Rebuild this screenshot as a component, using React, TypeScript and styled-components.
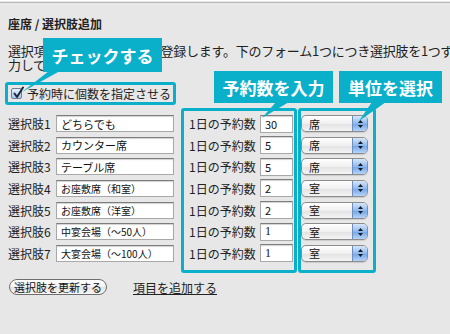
import React from "react";
import styled, { createGlobalStyle } from "styled-components";

const TEAL = "#0aafca";
const JP = `"Noto Sans CJK JP", "Noto Sans", sans-serif`;

const Global = createGlobalStyle`
  html, body { margin: 0; padding: 0; background: #e7e7e7; overflow: hidden; }
  body { font-family: ${JP}; color: #222; }
`;

const Page = styled.div`
  position: relative;
  width: 450px;
  height: 334px;
  overflow: hidden;
  padding: 0 8px;
  box-sizing: border-box;
  background: #e7e7e7;
`;

const TopRule = styled.div`
  margin: 0 -8px;
  height: 1px;
  border-top: 1px solid #ffffff;
  border-bottom: 1px solid #b8b8b8;
`;

const Title = styled.h1`
  margin: 14px 0 0;
  font-size: 12px;
  line-height: 14px;
  font-weight: 700;
  color: #222;
`;

const Desc = styled.p`
  margin: 13px 0 0;
  font-size: 13px;
  line-height: 14px;
  letter-spacing: -0.25px;
  white-space: nowrap;
  color: #222;
`;

const CheckFrame = styled.div`
  margin: 10px 0 0 -3px;
  width: 171px;
  height: 23px;
  box-sizing: border-box;
  border: 3px solid ${TEAL};
  border-radius: 3px;
  display: flex;
  align-items: center;
  gap: 5px;
  padding-left: 3px;
  font-size: 12px;
  color: #222;
  white-space: nowrap;
`;

const CheckBox = styled.span`
  width: 11px;
  height: 11px;
  box-sizing: border-box;
  border: 1px solid #6f7f93;
  border-radius: 2px;
  background: linear-gradient(#e6f0fb, #a9c7ec);
  position: relative;
  flex: none;
  svg { position: absolute; left: 0; top: -3px; }
`;

const Table = styled.div`
  margin-top: 3px;
  display: flex;
  align-items: flex-start;
`;

const LeftCol = styled.div`
  padding-top: 4.7px;
  width: 166px;
`;

const Frame = styled.div<{ $w: number; $ml: number; $pl: number }>`
  margin-left: ${(p) => p.$ml}px;
  width: ${(p) => p.$w}px;
  box-sizing: border-box;
  border: 3px solid ${TEAL};
  border-radius: 3px;
  padding: 1.7px 0 6px ${(p) => p.$pl}px;
`;

const Row = styled.div`
  height: 21.67px;
  display: flex;
  align-items: center;
`;

const Label = styled.span`
  width: 48px;
  font-size: 12px;
  color: #222;
  white-space: nowrap;
`;

const CountLabel = styled.span`
  width: 67px;
  font-size: 12px;
  color: #222;
  white-space: nowrap;
`;

const Field = styled.input<{ $w: number; $h: number; $serif?: boolean; $ml?: number; $small?: boolean }>`
  width: ${(p) => p.$w}px;
  height: ${(p) => p.$h}px;
  margin: 0 0 0 ${(p) => p.$ml ?? 0}px;
  box-sizing: border-box;
  border: 1px solid #a9a9a9;
  border-top-color: #7d7d7d;
  box-shadow: inset 0 1px 1px rgba(0, 0, 0, 0.18);
  background: #fff;
  padding: 0 0 0 4px;
  font-family: ${(p) => (p.$serif ? `"Liberation Serif", serif` : JP)};
  font-size: ${(p) => (p.$serif ? 12 : p.$small ? 10 : 11)}px;
  color: #111;
  outline: none;
`;

const PopUp = styled.div`
  width: 67px;
  height: 17px;
  box-sizing: border-box;
  border: 1px solid #8c8c8c;
  border-radius: 5px;
  background: linear-gradient(#ffffff, #f0f0f0 50%, #e2e2e2 51%, #f4f4f4);
  display: flex;
  align-items: center;
  overflow: hidden;
  box-shadow: 0 1px 1px rgba(0, 0, 0, 0.12);
`;

const PopText = styled.span`
  flex: 1;
  padding-left: 7px;
  font-size: 11px;
  color: #111;
`;

const PopArrow = styled.span`
  width: 14px;
  height: 100%;
  border-left: 1px solid #6c8fc0;
  background: linear-gradient(#d6e6fa, #8fbaf0 50%, #6fa4ea 51%, #b5d3f8);
  display: flex;
  align-items: center;
  justify-content: center;
`;

const Actions = styled.div`
  margin-top: 4.5px;
  display: flex;
  align-items: center;
`;

const PillButton = styled.button`
  margin-left: 1px;
  width: 98px;
  height: 16px;
  box-sizing: border-box;
  border: 1px solid #6e6e6e;
  border-radius: 8px;
  background: linear-gradient(#ffffff, #f2f2f2 50%, #e3e3e3 51%, #f7f7f7);
  font-family: ${JP};
  font-size: 11px;
  line-height: 12px;
  color: #111;
  padding: 0;
  white-space: nowrap;
`;

const AddLink = styled.a`
  margin-left: 26px;
  font-size: 12px;
  color: #222;
  text-decoration: underline;
  white-space: nowrap;
  margin-top: 1px;
`;

const Callout = styled.div<{ $x: number; $y: number; $w: number; $h: number }>`
  position: absolute;
  left: ${(p) => p.$x}px;
  top: ${(p) => p.$y}px;
  width: ${(p) => p.$w}px;
  height: ${(p) => p.$h}px;
  background: ${TEAL};
  color: #fff;
  font-size: 17px;
  font-weight: 700;
  display: flex;
  align-items: center;
  justify-content: center;
  white-space: nowrap;
`;

const Tails = styled.svg`
  position: absolute;
  left: 0;
  top: 0;
  pointer-events: none;
`;

const rows = [
  { name: "どちらでも", n: "30", u: "席" },
  { name: "カウンター席", n: "5", u: "席" },
  { name: "テーブル席", n: "5", u: "席" },
  { name: "お座敷席（和室）", n: "2", u: "室" },
  { name: "お座敷席（洋室）", n: "2", u: "室" },
  { name: "中宴会場（〜50人）", n: "1", u: "室" },
  { name: "大宴会場（〜100人）", n: "1", u: "室" },
];

const Arrows = () => (
  <svg width="7" height="10" viewBox="0 0 7 10">
    <polygon points="3.5,1 6,4 1,4" fill="#1a1a1a" />
    <polygon points="1,6 6,6 3.5,9" fill="#1a1a1a" />
  </svg>
);

export default function App() {
  return (
    <>
      <Global />
      <Page>
        <TopRule />
        <Title>座席 / 選択肢追加</Title>
        <Desc>
          選択項目となる各選択肢を登録します。下のフォーム1つにつき選択肢を1つずつ入
          <br />
          力してください。
        </Desc>
        <CheckFrame>
          <CheckBox>
            <svg width="12" height="13" viewBox="0 0 12 13">
              <path d="M2.5 7.5 L5 11 L11 1.5" stroke="#1b2a3d" strokeWidth="2" fill="none" strokeLinecap="round" strokeLinejoin="round" />
            </svg>
          </CheckBox>
          <span>予約時に個数を指定させる</span>
        </CheckFrame>
        <Table>
          <LeftCol>
            {rows.map((r, i) => (
              <Row key={i}>
                <Label>選択肢{i + 1}</Label>
                <Field $w={118} $h={17} $small={i >= 3} readOnly value={r.name} />
              </Row>
            ))}
          </LeftCol>
          <Frame $w={116} $ml={7} $pl={5}>
            {rows.map((r, i) => (
              <Row key={i}>
                <CountLabel>1日の予約数</CountLabel>
                <Field $w={33} $h={18} $ml={4} $serif={r.n === "1"} readOnly value={r.n} />
              </Row>
            ))}
          </Frame>
          <Frame $w={78} $ml={1} $pl={0}>
            {rows.map((r, i) => (
              <Row key={i}>
                <PopUp>
                  <PopText>{r.u}</PopText>
                  <PopArrow>
                    <Arrows />
                  </PopArrow>
                </PopUp>
              </Row>
            ))}
          </Frame>
        </Table>
        <Actions>
          <PillButton>選択肢を更新する</PillButton>
          <AddLink href="#">項目を追加する</AddLink>
        </Actions>

        <Callout $x={43} $y={38} $w={119} $h={34}>チェックする</Callout>
        <Callout $x={214} $y={71} $w={119} $h={32}>予約数を入力</Callout>
        <Callout $x={339} $y={71} $w={103} $h={32}>単位を選択</Callout>
        <Tails width="450" height="334" viewBox="0 0 450 334">
          <polygon points="49,71 60,71 22,92" fill={TEAL} />
          <polygon points="276,102 289,102 262,118" fill={TEAL} />
          <polygon points="372,102 386,102 359,121" fill={TEAL} />
        </Tails>
      </Page>
    </>
  );
}
